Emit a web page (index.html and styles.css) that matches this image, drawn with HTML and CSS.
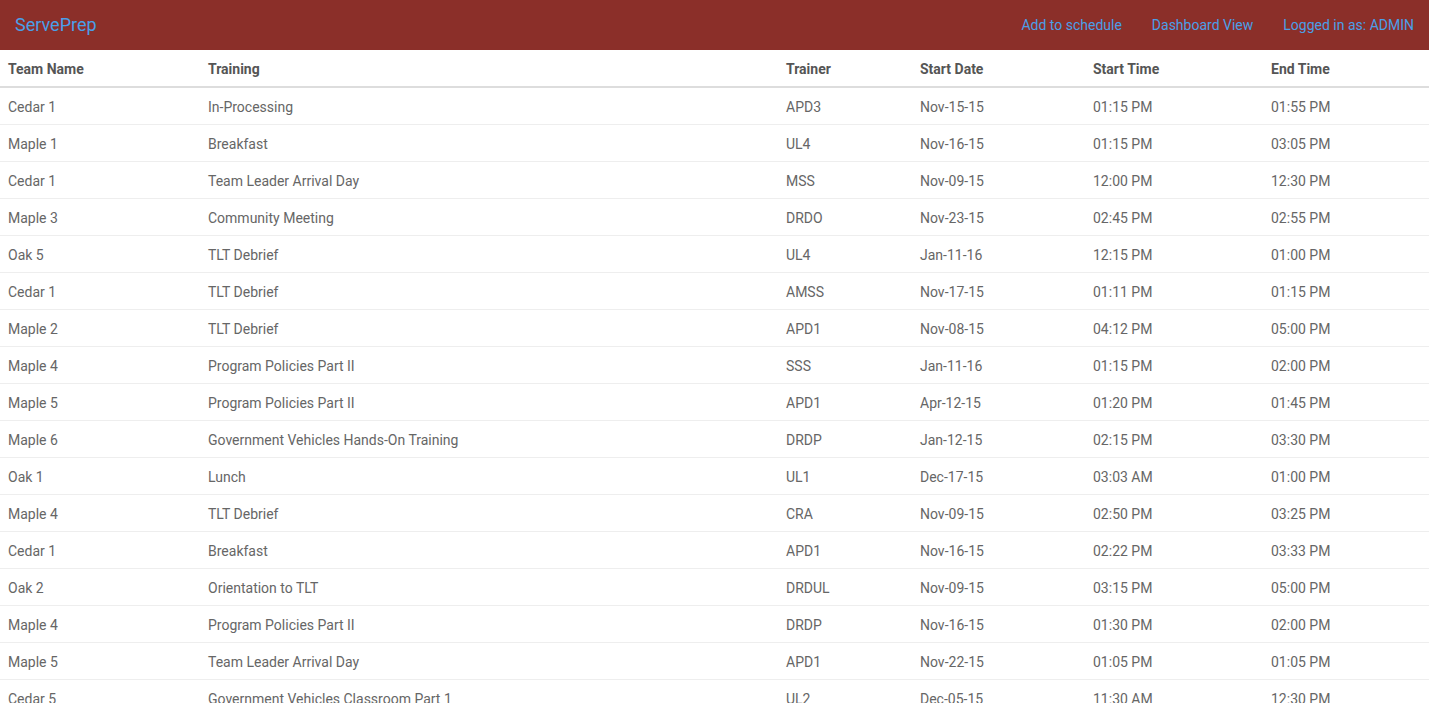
FILE: index.html
```html
<!DOCTYPE html>
<html>
<head>
<meta charset="utf-8">
<title>ServePrep</title>
<link rel="stylesheet" href="styles.css">
</head>
<body>
<nav class="navbar">
  <a class="brand" href="#">ServePrep</a>
  <ul class="nav-links">
    <li><a href="#">Add to schedule</a></li>
    <li><a href="#">Dashboard View</a></li>
    <li><a href="#">Logged in as: ADMIN</a></li>
  </ul>
</nav>
<table class="schedule">
  <colgroup>
    <col class="c-team"><col class="c-training"><col class="c-trainer"><col class="c-date"><col class="c-start"><col class="c-end">
  </colgroup>
  <thead>
    <tr><th>Team Name</th><th>Training</th><th>Trainer</th><th>Start Date</th><th>Start Time</th><th>End Time</th></tr>
  </thead>
  <tbody>
    <tr><td>Cedar 1</td><td>In-Processing</td><td>APD3</td><td>Nov-15-15</td><td>01:15 PM</td><td>01:55 PM</td></tr>
    <tr><td>Maple 1</td><td>Breakfast</td><td>UL4</td><td>Nov-16-15</td><td>01:15 PM</td><td>03:05 PM</td></tr>
    <tr><td>Cedar 1</td><td>Team Leader Arrival Day</td><td>MSS</td><td>Nov-09-15</td><td>12:00 PM</td><td>12:30 PM</td></tr>
    <tr><td>Maple 3</td><td>Community Meeting</td><td>DRDO</td><td>Nov-23-15</td><td>02:45 PM</td><td>02:55 PM</td></tr>
    <tr><td>Oak 5</td><td>TLT Debrief</td><td>UL4</td><td>Jan-11-16</td><td>12:15 PM</td><td>01:00 PM</td></tr>
    <tr><td>Cedar 1</td><td>TLT Debrief</td><td>AMSS</td><td>Nov-17-15</td><td>01:11 PM</td><td>01:15 PM</td></tr>
    <tr><td>Maple 2</td><td>TLT Debrief</td><td>APD1</td><td>Nov-08-15</td><td>04:12 PM</td><td>05:00 PM</td></tr>
    <tr><td>Maple 4</td><td>Program Policies Part II</td><td>SSS</td><td>Jan-11-16</td><td>01:15 PM</td><td>02:00 PM</td></tr>
    <tr><td>Maple 5</td><td>Program Policies Part II</td><td>APD1</td><td>Apr-12-15</td><td>01:20 PM</td><td>01:45 PM</td></tr>
    <tr><td>Maple 6</td><td>Government Vehicles Hands-On Training</td><td>DRDP</td><td>Jan-12-15</td><td>02:15 PM</td><td>03:30 PM</td></tr>
    <tr><td>Oak 1</td><td>Lunch</td><td>UL1</td><td>Dec-17-15</td><td>03:03 AM</td><td>01:00 PM</td></tr>
    <tr><td>Maple 4</td><td>TLT Debrief</td><td>CRA</td><td>Nov-09-15</td><td>02:50 PM</td><td>03:25 PM</td></tr>
    <tr><td>Cedar 1</td><td>Breakfast</td><td>APD1</td><td>Nov-16-15</td><td>02:22 PM</td><td>03:33 PM</td></tr>
    <tr><td>Oak 2</td><td>Orientation to TLT</td><td>DRDUL</td><td>Nov-09-15</td><td>03:15 PM</td><td>05:00 PM</td></tr>
    <tr><td>Maple 4</td><td>Program Policies Part II</td><td>DRDP</td><td>Nov-16-15</td><td>01:30 PM</td><td>02:00 PM</td></tr>
    <tr><td>Maple 5</td><td>Team Leader Arrival Day</td><td>APD1</td><td>Nov-22-15</td><td>01:05 PM</td><td>01:05 PM</td></tr>
    <tr><td>Cedar 5</td><td>Government Vehicles Classroom Part 1</td><td>UL2</td><td>Dec-05-15</td><td>11:30 AM</td><td>12:30 PM</td></tr>
  </tbody>
</table>
</body>
</html>
```
FILE: styles.css
```css
* { box-sizing: border-box; }
html, body {
  margin: 0;
  padding: 0;
  background: #fff;
  font-family: Roboto, "Liberation Sans", sans-serif;
  font-size: 13px;
  line-height: 20px;
  color: #666;
}
.navbar {
  display: flex;
  align-items: center;
  justify-content: space-between;
  height: 50px;
  background: #8b2f29;
}
.navbar a {
  color: #4a9fe8;
  text-decoration: none;
}
.brand {
  padding: 0 15px;
  font-size: 18px;
  line-height: 50px;
}
.nav-links {
  display: flex;
  list-style: none;
  margin: 0;
  padding: 0;
}
.nav-links a {
  display: block;
  padding: 1px 15px 0;
  font-size: 14px;
  line-height: 49px;
}
.schedule {
  width: 100%;
  border-collapse: collapse;
  border-spacing: 0;
  table-layout: fixed;
}
.c-team { width: 200px; }
.c-training { width: 578px; }
.c-trainer { width: 134px; }
.c-date { width: 173px; }
.c-start { width: 178px; }
.c-end { width: 166px; }
.schedule th {
  text-align: left;
  font-weight: 700;
  color: #555;
  font-size: 14px;
  padding: 9px 8px 7px;
  line-height: 20px;
  border-bottom: 2px solid #ddd;
}
.schedule td {
  font-size: 14px;
  padding: 9px 8px 7px;
  line-height: 20px;
  border-top: 1px solid #eee;
  white-space: nowrap;
}
.schedule tbody tr:first-child td { border-top: 0; }
```
